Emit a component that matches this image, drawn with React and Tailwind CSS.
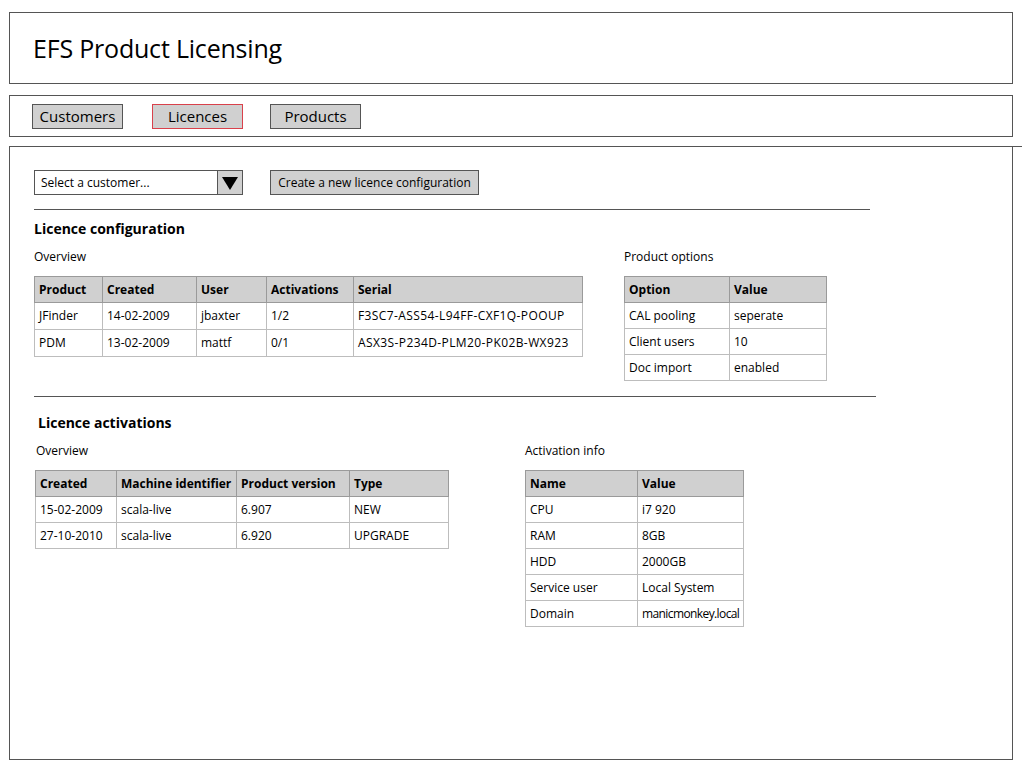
import React from "react";

const font = { fontFamily: '"Open Sans", "Liberation Sans", sans-serif' };

function Table({ cols, rows, className = "", rowH = "h-[26px]" }) {
  return (
    <table className={"table-fixed border-collapse border border-[#9a9a9a] text-[12px] text-black " + className}>
      <thead>
        <tr className="bg-[#d0d0d0] h-[26px]">
          {cols.map((c) => (
            <th
              key={c.label}
              style={{ width: c.w }}
              className="border border-[#9a9a9a] text-left font-bold px-[4px] leading-none whitespace-nowrap"
            >
              {c.label}
            </th>
          ))}
        </tr>
      </thead>
      <tbody>
        {rows.map((r, i) => (
          <tr key={i} className={rowH + " bg-white"}>
            {r.map((v, j) => (
              <td key={j} className="border border-[#bdbdbd] px-[4px] leading-none whitespace-nowrap">
                {v}
              </td>
            ))}
          </tr>
        ))}
      </tbody>
    </table>
  );
}

export default function App() {
  return (
    <div className="w-[1024px] h-[768px] bg-white overflow-hidden relative" style={font}>
      <div className="pt-[12px] pl-[9px]">
        {/* Header */}
        <div className="w-[1004px] h-[72px] border border-[#555] flex items-center pl-[23px]">
          <h1 className="text-[25px] text-black leading-none tracking-[-0.2px]">EFS Product Licensing</h1>
        </div>
        {/* Nav */}
        <div className="mt-[11px] w-[1004px] h-[42px] border border-[#555] flex items-center pl-[22px]">
          <button className="w-[91px] h-[25px] bg-[#d0d0d0] border border-[#555] text-[15px] leading-none text-black">
            Customers
          </button>
          <button className="ml-[29px] w-[91px] h-[25px] bg-[#d0d0d0] border border-[#d9414b] text-[15px] leading-none text-black">
            Licences
          </button>
          <button className="ml-[27px] w-[91px] h-[25px] bg-[#d0d0d0] border border-[#555] text-[15px] leading-none text-black">
            Products
          </button>
        </div>
        {/* Main */}
        <div className="relative mt-[9px] w-[1004px] h-[614px] border border-[#555] pl-[24px] pt-[23px]">
          <div className="absolute top-[-1px] right-[-10px] w-[10px] h-[1px] bg-[#555]" />
          <div className="flex items-center gap-[27px]">
            <div className="w-[209px] h-[25px] border border-[#555] flex">
              <div className="flex-1 flex items-center pl-[6px] text-[12px] text-black">Select a customer...</div>
              <div className="w-[25px] bg-[#d0d0d0] border-l border-[#555] flex items-center justify-center">
                <svg width="16" height="14" viewBox="0 0 16 14">
                  <path d="M0 1 L16 1 L8 14 Z" fill="#000" />
                </svg>
              </div>
            </div>
            <button className="w-[209px] h-[25px] bg-[#d0d0d0] border border-[#555] text-[12px] text-black leading-none">
              Create a new licence configuration
            </button>
          </div>
          <div className="mt-[14px] w-[836px] h-[1px] bg-[#555]" />
          <div className="mt-[12px] text-[14px] font-bold text-black leading-none">Licence configuration</div>
          <div className="flex mt-[15px]">
            <div>
              <div className="text-[12px] text-black leading-none">Overview</div>
              <Table
                className="mt-[13px]"
                rowH="h-[27px]"
                cols={[
                  { label: "Product", w: 68 },
                  { label: "Created", w: 94 },
                  { label: "User", w: 70 },
                  { label: "Activations", w: 87 },
                  { label: "Serial", w: 229 },
                ]}
                rows={[
                  ["JFinder", "14-02-2009", "jbaxter", "1/2", <span className="tracking-[0.4px]">F3SC7-ASS54-L94FF-CXF1Q-POOUP</span>],
                  ["PDM", "13-02-2009", "mattf", "0/1", <span className="tracking-[0.4px]">ASX3S-P234D-PLM20-PK02B-WX923</span>],
                ]}
              />
            </div>
            <div className="ml-[41px]">
              <div className="text-[12px] text-black leading-none">Product options</div>
              <Table
                className="mt-[13px]"
                cols={[
                  { label: "Option", w: 105 },
                  { label: "Value", w: 97 },
                ]}
                rows={[
                  ["CAL pooling", "seperate"],
                  ["Client users", "10"],
                  ["Doc import", "enabled"],
                ]}
              />
            </div>
          </div>
          <div className="mt-[15px] w-[842px] h-[1px] bg-[#555]" />
          <div className="mt-[19px] ml-[4px] text-[14px] font-bold text-black leading-none">Licence activations</div>
          <div className="flex mt-[15px] ml-[1px]">
            <div>
              <div className="text-[12px] text-black leading-none ml-[1px]">Overview</div>
              <Table
                className="mt-[13px]"
                cols={[
                  { label: "Created", w: 81 },
                  { label: "Machine identifier", w: 120 },
                  { label: "Product version", w: 113 },
                  { label: "Type", w: 99 },
                ]}
                rows={[
                  ["15-02-2009", "scala-live", "6.907", "NEW"],
                  ["27-10-2010", "scala-live", "6.920", "UPGRADE"],
                ]}
              />
            </div>
            <div className="ml-[76px]">
              <div className="text-[12px] text-black leading-none">Activation info</div>
              <Table
                className="mt-[13px]"
                cols={[
                  { label: "Name", w: 112 },
                  { label: "Value", w: 105 },
                ]}
                rows={[
                  ["CPU", "i7 920"],
                  ["RAM", "8GB"],
                  ["HDD", "2000GB"],
                  ["Service user", "Local System"],
                  ["Domain", <span className="tracking-[-0.6px]">manicmonkey.local</span>],
                ]}
              />
            </div>
          </div>
        </div>
      </div>
    </div>
  );
}
